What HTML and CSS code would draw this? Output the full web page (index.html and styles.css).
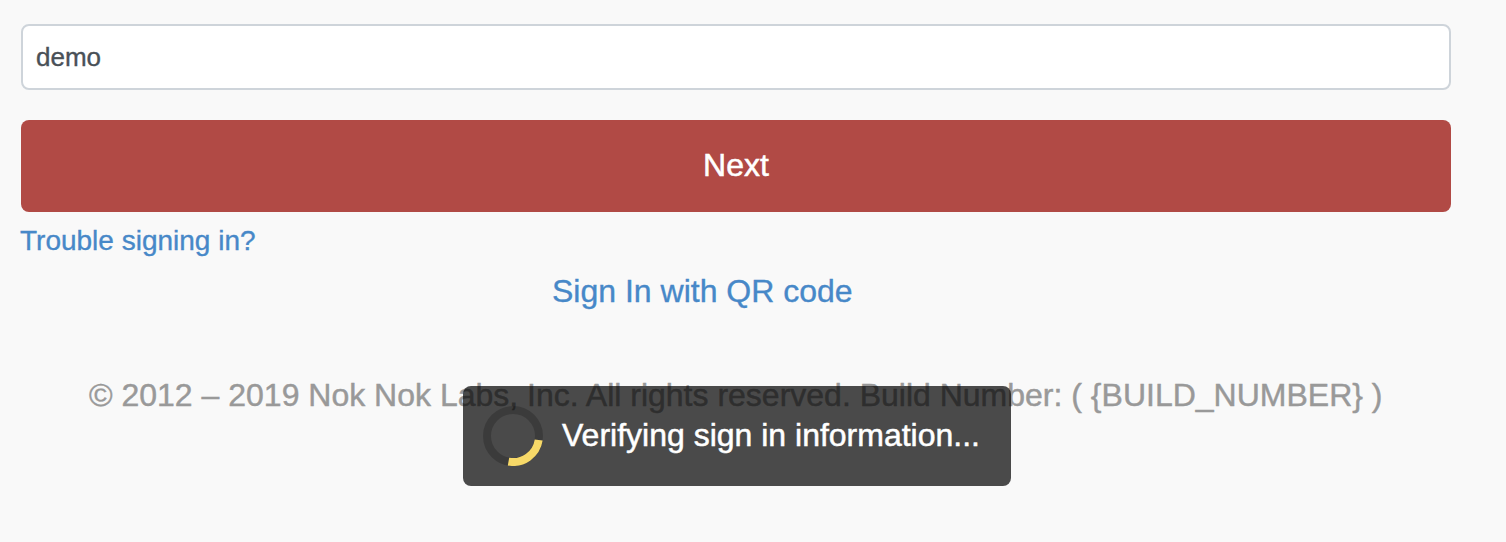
FILE: index.html
```html
<!DOCTYPE html>
<html lang="en">
<head>
<meta charset="utf-8">
<title>Sign In</title>
<link rel="stylesheet" href="styles.css">
</head>
<body>
<main class="page">
<form class="form">
<input class="username" type="text" value="demo" aria-label="Username">
<button class="next" type="button"><span class="next-label">Next</span></button>
</form>
<a class="trouble" href="#"><span class="trouble-label">Trouble signing in?</span></a>
<a class="qr" href="#"><span class="qr-label">Sign In with QR code</span></a>
<footer class="footer"><span class="footer-label">© 2012 – 2019 Nok Nok Labs, Inc. All rights reserved. Build Number: ( {BUILD_NUMBER} )</span></footer>
<div class="toast" role="status">
<svg class="spinner" viewBox="0 0 60 60"><circle cx="30" cy="30" r="26" fill="none" stroke="#000" stroke-opacity=".2" stroke-width="8"/><path d="M55.7 34A26 26 0 0 1 25.5 55.6" fill="none" stroke="#f7d968" stroke-width="8"/></svg>
<span class="toast-label">Verifying sign in information...</span>
</div>
</main>
</body>
</html>
```
FILE: styles.css
```css
* { box-sizing: border-box; }
body { margin: 0; background: #f9f9f9; font-family: "Liberation Sans", Arial, sans-serif; -webkit-text-stroke: 0.35px currentColor; }
.page { position: relative; width: 1506px; height: 542px; padding: 24px 55px 0 20px; display: flex; flex-direction: column; align-items: flex-start; overflow: hidden; }
.form { width: 1430px; margin-left: 1px; display: flex; flex-direction: column; gap: 30px; }
.username { height: 66px; width: 100%; margin: 0; padding: 0 13px; border: 2px solid #ced4da; border-radius: 8px; background: #fff; color: #495057; font: 26px "Liberation Sans", Arial, sans-serif; outline: none; -webkit-text-stroke: 0.35px #495057; }
.next { height: 92px; width: 100%; padding: 0 0 2px; border: 0; border-radius: 8px; background: #b14a45; color: #fff; font: 32px "Liberation Sans", Arial, sans-serif; -webkit-text-stroke: 0.5px #fff; }
a { color: #4788c8; text-decoration: none; white-space: nowrap; }
.trouble { margin-top: 12px; font-size: 28px; line-height: 34px; }
.qr { margin: 13px 0 0 532px; font-size: 32px; line-height: 40px; }
.footer { margin: 64px 0 0 69px; color: #999; font-size: 32px; line-height: 40px; white-space: nowrap; -webkit-text-stroke: 0.45px #999; }
.toast { position: absolute; left: 463px; top: 386px; width: 548px; height: 100px; padding: 0 20px; display: flex; align-items: center; gap: 19px; border-radius: 8px; background: rgba(0,0,0,.7); color: #fff; font-size: 32px; white-space: nowrap; -webkit-text-stroke: 0.5px #fff; }
.toast-label { padding-bottom: 2px; }
.spinner { width: 60px; height: 60px; flex: none; }
```
